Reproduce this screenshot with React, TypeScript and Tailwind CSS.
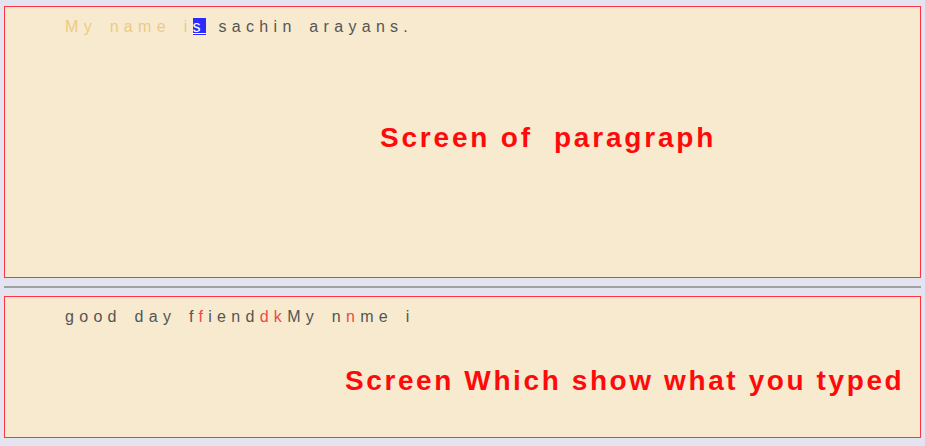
import React from "react"

type Part = { text: string; color: "ok" | "bad" | "done" | "rest" }

const typed: Part[] = [
  { text: "good day f", color: "ok" },
  { text: "f", color: "bad" },
  { text: "iend", color: "ok" },
  { text: "dk", color: "bad" },
  { text: "My n", color: "ok" },
  { text: "n", color: "bad" },
  { text: "me i", color: "ok" },
]

const tone: Record<Part["color"], string> = {
  ok: "text-[#555555]",
  bad: "text-[#f04848]",
  done: "text-[#ecca85]",
  rest: "text-[#555555]",
}

function Line({ children }: { children: React.ReactNode }) {
  return (
    <p className="pl-[60px] text-[16px] leading-[20px] tracking-[5.3px] [word-spacing:3px] whitespace-pre">
      {children}
    </p>
  )
}

export default function App() {
  return (
    <div
      className="min-h-[446px] bg-[#e3e4f0] px-[4px] pt-[6px]"
      style={{ fontFamily: '"Liberation Sans", Arial, sans-serif' }}
    >
      <section className="h-[272px] border border-[#ff3344] bg-[#f7eacf] pt-[10px]">
        <Line>
          <span className={tone.done}>My name i</span>
          <span className="bg-[#2b2bff] text-white underline">s</span>
          <span className={tone.rest}> sachin arayans.</span>
        </Line>
        <h1 className="mt-[85px] pl-[375px] text-[28px] leading-[32px] font-bold tracking-[2.8px] text-[#ff0a0a] whitespace-pre">
          Screen of  paragraph
        </h1>
      </section>

      <hr className="mt-[8px] border-0 border-t-2 border-[#a0a0a0]" />

      <section className="mt-[8px] h-[142px] border border-[#ff3344] bg-[#f7eacf] pt-[10px]">
        <Line>
          {typed.map((p, i) => (
            <span key={i} className={tone[p.color]}>
              {p.text}
            </span>
          ))}
        </Line>
        <h2 className="mt-[38px] pl-[340px] text-[28px] leading-[32px] font-bold tracking-[2.6px] text-[#ff0a0a] whitespace-pre">
          Screen Which show what you typed
        </h2>
      </section>
    </div>
  )
}
